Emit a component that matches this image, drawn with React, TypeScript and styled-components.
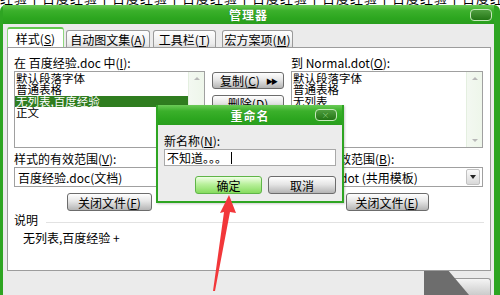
import React from "react";
import styled, { createGlobalStyle } from "styled-components";

const GlobalStyle = createGlobalStyle`
  html, body {
    margin: 0;
    padding: 0;
    background: #ffffff;
    overflow: hidden;
  }
  body {
    font-family: "Noto Sans CJK SC", "DejaVu Sans", sans-serif;
    font-size: 12px;
    color: #000;
  }
`;

const Screen = styled.div`
  position: relative;
  width: 500px;
  height: 295px;
  overflow: hidden;
  background: #fff;
`;

/* cut-off line of text from the page above the window */
const TopStrip = styled.div`
  height: 5px;
  overflow: hidden;
  white-space: nowrap;
  background: #fff;
`;

const StripText = styled.div`
  margin-top: -10px;
  font-size: 13px;
  line-height: 15px;
  letter-spacing: 1px;
`;

const Window = styled.div`
  height: 290px;
  display: flex;
  flex-direction: column;
  border-left: 3px solid #2ea522;
  border-right: 6px solid #2ea522;
  border-radius: 6px 6px 0 0;
  background: #ebebeb;
`;

const TitleBar = styled.div<{ $small?: boolean }>`
  position: relative;
  height: ${(p) => (p.$small ? 20 : 19)}px;
  flex-shrink: 0;
  display: flex;
  align-items: center;
  justify-content: center;
  background: linear-gradient(#6ccb58 0%, #3bb02b 30%, #2ca61f 70%, #2a9e1e 100%);
  color: #fff;
  font-weight: bold;
  font-size: 12px;
  letter-spacing: 1px;
  text-shadow: 0 0 1px #1c6a12;
`;

const CloseButton = styled.div<{ $right: number }>`
  position: absolute;
  right: ${(p) => p.$right}px;
  top: 4px;
  width: 20px;
  height: 10px;
  border-radius: 4px;
  border: 1px solid #c6e8bc;
  background: linear-gradient(#4f9e3f, #237515);
  color: #8ccf7c;
  font-size: 8px;
  line-height: 10px;
  text-align: center;
  font-weight: normal;
`;

const Body = styled.div`
  flex: 1;
  display: flex;
  flex-direction: column;
  padding: 3px 3px 0 4px;
`;

const TabRow = styled.div`
  display: flex;
  align-items: flex-end;
  height: 20px;
`;

const Tab = styled.div<{ $active?: boolean; $w: number; $gap?: number }>`
  width: ${(p) => p.$w}px;
  height: ${(p) => (p.$active ? 20 : 17)}px;
  margin-left: ${(p) => p.$gap ?? 0}px;
  box-sizing: border-box;
  display: flex;
  align-items: center;
  justify-content: center;
  border: 1px solid ${(p) => (p.$active ? "#8fd67e" : "#9a9a9a")};
  border-bottom: none;
  border-top: ${(p) => (p.$active ? "2px solid #63c94f" : "1px solid #9a9a9a")};
  border-radius: 3px 3px 0 0;
  background: ${(p) =>
    p.$active ? "#ffffff" : "linear-gradient(#ffffff, #ececec 80%, #dcdcdc)"};
  font-size: 12px;
  white-space: nowrap;
`;

const Panel = styled.div`
  height: 224px;
  box-sizing: border-box;
  border: 1px solid #9c9c9c;
  background: #ffffff;
  padding: 8px 6px 0 6px;
  display: flex;
  flex-direction: column;
`;

const Grid = styled.div`
  display: grid;
  grid-template-columns: 191px 72px 192px;
  column-gap: 7px;
`;

const Column = styled.div`
  display: flex;
  flex-direction: column;
`;

const Label = styled.div<{ $top?: number }>`
  height: 14px;
  line-height: 14px;
  margin-top: ${(p) => p.$top ?? 0}px;
  margin-bottom: 1px;
  white-space: nowrap;
  font-size: 12px;
`;

const ListBox = styled.div`
  height: 77px;
  box-sizing: border-box;
  border: 1px solid #a0a0a0;
  background: #fff;
  display: flex;
`;

const ListItems = styled.div`
  flex: 1;
  padding-top: 1px;
`;

const ListItem = styled.div<{ $selected?: boolean }>`
  height: 11.4px;
  line-height: 11.4px;
  padding-left: 1px;
  background: ${(p) => (p.$selected ? "#2f7d1f" : "transparent")};
  color: ${(p) => (p.$selected ? "#fff" : "#000")};
  font-size: 11.5px;
  white-space: nowrap;
`;

const ScrollBar = styled.div`
  width: 15px;
  display: flex;
  flex-direction: column;
  justify-content: space-between;
  align-items: center;
  padding: 5px 0;
  background: linear-gradient(90deg, #f3f8f1, #eef6ea);
  border-left: 1px solid #e4efe0;
`;

const Arrow = styled.div<{ $down?: boolean }>`
  width: 0;
  height: 0;
  border-left: 3px solid transparent;
  border-right: 3px solid transparent;
  ${(p) =>
    p.$down ? "border-top: 3px solid #b8b8b8;" : "border-bottom: 3px solid #b8b8b8;"}
`;

const Combo = styled.div`
  height: 20px;
  box-sizing: border-box;
  border: 1px solid #a0a0a0;
  background: #fff;
  display: flex;
  align-items: center;
  padding: 0 2px 0 3px;
  white-space: nowrap;
  font-size: 12px;
`;

const ComboText = styled.span`
  flex: 1;
`;

const DropButton = styled.div`
  width: 14px;
  height: 16px;
  box-sizing: border-box;
  border: 1px solid #c2c2c2;
  border-radius: 2px;
  background: linear-gradient(#fafafa, #d9d9d9);
  display: flex;
  align-items: center;
  justify-content: center;
  &::after {
    content: "";
    border-left: 3px solid transparent;
    border-right: 3px solid transparent;
    border-top: 4px solid #222;
  }
`;

const Button = styled.div<{ $w: number; $green?: boolean; $h?: number }>`
  width: ${(p) => p.$w}px;
  height: ${(p) => p.$h ?? 18}px;
  box-sizing: border-box;
  display: flex;
  align-items: center;
  justify-content: center;
  gap: 6px;
  border: 1px solid ${(p) => (p.$green ? "#5fb548" : "#6c6c6c")};
  border-radius: 3px;
  background: ${(p) =>
    p.$green
      ? "linear-gradient(#f0ffe6, #b9f09c 45%, #86dc5e 100%)"
      : "linear-gradient(#fefefe, #e6e6e6 45%, #b4b4b4 100%)"};
  font-size: 12px;
  white-space: nowrap;
`;

const Chevrons = styled.span`
  font-size: 7px;
  letter-spacing: -2px;
`;

const CenterRow = styled.div`
  display: flex;
  justify-content: center;
  margin-top: 6px;
`;

const MiddleColumn = styled.div`
  display: flex;
  flex-direction: column;
  gap: 6px;
  padding-top: 16px;
`;

const Section = styled.div`
  display: flex;
  align-items: center;
  gap: 8px;
  margin-top: 1px;
  height: 14px;
`;

const Rule = styled.div`
  flex: 1;
  height: 1px;
  background: #e2e2e2;
  margin-top: 6px;
`;

const Description = styled.div`
  padding: 3px 0 0 9px;
  font-size: 12px;
`;

const Footer = styled.div`
  flex: 1;
  display: flex;
  justify-content: flex-end;
  align-items: flex-start;
`;

const Shade = styled.div`
  width: 45px;
  height: 24px;
  background: #6d6d6d;
  clip-path: polygon(0 0, 55% 0, 100% 100%, 0 100%);
  margin-right: -20px;
`;

const FooterButton = styled.div`
  width: 40px;
  height: 17px;
  margin-top: 7px;
  border: 1px solid #9a9a9a;
  border-bottom: none;
  border-radius: 3px 3px 0 0;
  background: linear-gradient(#f4f4f4, #c9c9c9);
`;

const Dialog = styled.div`
  position: absolute;
  left: 156px;
  top: 105px;
  width: 188px;
  height: 98px;
  box-sizing: border-box;
  border: 2px solid #2ea522;
  border-top: none;
  background: #ececec;
  display: flex;
  flex-direction: column;
  box-shadow: 1px 1px 2px rgba(0, 0, 0, 0.2);
`;

const DialogBody = styled.div`
  padding: 9px 6px 0 6px;
  display: flex;
  flex-direction: column;
`;

const TextInput = styled.div`
  height: 17px;
  box-sizing: border-box;
  border: 1px solid #a9a9a9;
  background: #fff;
  display: flex;
  align-items: center;
  padding-left: 2px;
  font-size: 12px;
  white-space: nowrap;
`;

const Caret = styled.span`
  display: inline-block;
  width: 1px;
  height: 12px;
  background: #000;
  margin-left: 4px;
`;

const DialogButtons = styled.div`
  display: flex;
  justify-content: flex-end;
  gap: 6px;
  margin-top: 10px;
`;

const RedArrow = styled.svg`
  position: absolute;
  left: 0;
  top: 0;
  pointer-events: none;
`;

const U = styled.span`
  text-decoration: underline;
`;

const Key = ({ k }: { k: string }) => (
  <>
    (<U>{k}</U>)
  </>
);

export default function App() {
  return (
    <Screen>
      <GlobalStyle />
      <TopStrip>
        <StripText>
          经验丨百度经验丨百度经验丨百度经验丨百度经验丨百度经验丨百度经验丨百度经验丨百度经验丨百度经验
        </StripText>
      </TopStrip>
      <Window>
        <TitleBar>
          管理器
          <CloseButton $right={2} />
        </TitleBar>
        <Body>
          <TabRow>
            <Tab $active $w={57}>
              样式<Key k="S" />
            </Tab>
            <Tab $w={84} $gap={2}>
              自动图文集<Key k="A" />
            </Tab>
            <Tab $w={63} $gap={3}>
              工具栏<Key k="T" />
            </Tab>
            <Tab $w={71} $gap={6}>
              宏方案项<Key k="M" />
            </Tab>
          </TabRow>
          <Panel>
            <Grid>
              <Column>
                <Label>
                  在 百度经验.doc 中<Key k="I" />:
                </Label>
                <ListBox>
                  <ListItems>
                    <ListItem>默认段落字体</ListItem>
                    <ListItem>普通表格</ListItem>
                    <ListItem $selected>无列表,百度经验</ListItem>
                    <ListItem>正文</ListItem>
                  </ListItems>
                  <ScrollBar>
                    <Arrow />
                    <Arrow $down />
                  </ScrollBar>
                </ListBox>
                <Label $top={4}>
                  样式的有效范围<Key k="V" />:
                </Label>
                <Combo>
                  <ComboText>百度经验.doc(文档)</ComboText>
                </Combo>
                <CenterRow>
                  <Button $w={85}>
                    <span>
                      关闭文件<Key k="F" />
                    </span>
                  </Button>
                </CenterRow>
              </Column>
              <MiddleColumn>
                <Button $w={72} $h={17}>
                  <span>
                    复制<Key k="C" />
                  </span>
                  <Chevrons>▶▶</Chevrons>
                </Button>
                <Button $w={72} $h={17}>
                  <span>
                    删除<Key k="D" />
                  </span>
                </Button>
              </MiddleColumn>
              <Column>
                <Label>
                  到 Normal.dot<Key k="O" />:
                </Label>
                <ListBox>
                  <ListItems>
                    <ListItem>默认段落字体</ListItem>
                    <ListItem>普通表格</ListItem>
                    <ListItem>无列表</ListItem>
                  </ListItems>
                  <ScrollBar>
                    <Arrow />
                    <Arrow $down />
                  </ScrollBar>
                </ListBox>
                <Label $top={4}>
                  样式的有效范围<Key k="B" />:
                </Label>
                <Combo>
                  <ComboText>Normal.dot (共用模板)</ComboText>
                  <DropButton />
                </Combo>
                <CenterRow>
                  <Button $w={83}>
                    <span>
                      关闭文件<Key k="E" />
                    </span>
                  </Button>
                </CenterRow>
              </Column>
            </Grid>
            <Section>
              <span>说明</span>
              <Rule />
            </Section>
            <Description>无列表,百度经验 +</Description>
          </Panel>
          <Footer>
            <Shade />
            <FooterButton />
          </Footer>
        </Body>
      </Window>

      <Dialog>
        <TitleBar $small>
          重命名
          <CloseButton $right={5}>×</CloseButton>
        </TitleBar>
        <DialogBody>
          <Label>
            新名称<Key k="N" />:
          </Label>
          <TextInput>
            不知道。。。<Caret />
          </TextInput>
          <DialogButtons>
            <Button $green $w={67} $h={18}>
              确定
            </Button>
            <Button $w={68} $h={18}>
              取消
            </Button>
          </DialogButtons>
        </DialogBody>
      </Dialog>

      <RedArrow width="500" height="295" viewBox="0 0 500 295">
        <polygon
          points="213,291 224,212 220,213 229,195 236,213 230,212 215,291"
          fill="#f2373a"
        />
      </RedArrow>
    </Screen>
  );
}
